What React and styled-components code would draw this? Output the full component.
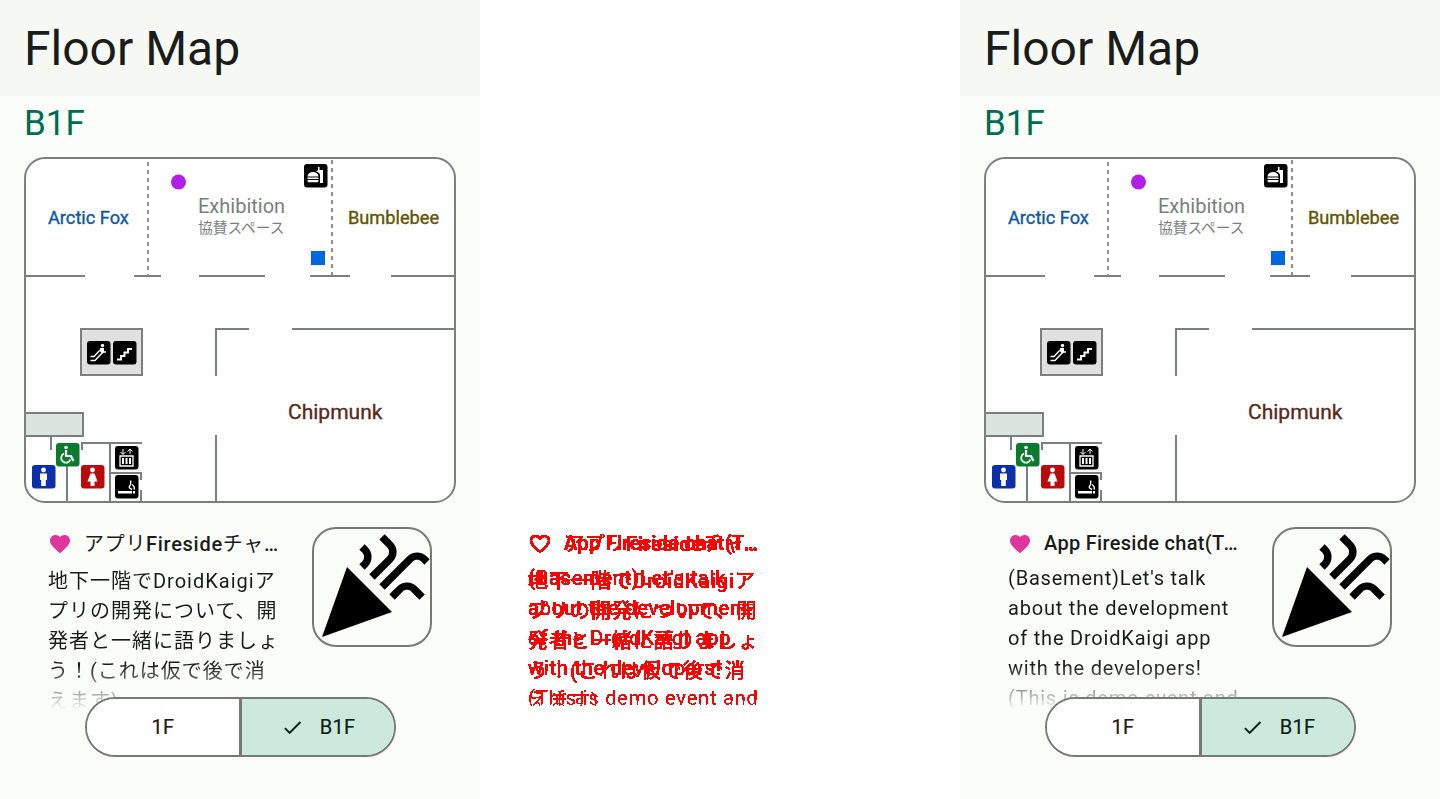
import React from "react";
import styled, { createGlobalStyle } from "styled-components";

const GlobalStyle = createGlobalStyle`
  html, body {
    margin: 0;
    padding: 0;
    background: #ffffff;
    font-family: "Roboto", "Noto Sans CJK JP", sans-serif;
  }
`;

const Page = styled.div`
  display: grid;
  grid-template-columns: repeat(3, 480px);
  height: 799px;
  overflow: hidden;
`;

const Screen = styled.section`
  position: relative;
  height: 799px;
  background: #fbfdf8;
`;

const TestLayer = styled.section`
  height: 799px;
  padding-top: 527px;
  box-sizing: border-box;
  background: #ffffff;
`;

const TopBar = styled.header`
  height: 96px;
  padding: 0 24px;
  box-sizing: border-box;
  background: #f5f8f3;
  color: #191c1a;
  font-size: 48px;
  line-height: 98px;
`;

const FloorLabel = styled.h2`
  margin: 0 0 5px;
  padding: 0 24px;
  color: #006c4e;
  font-size: 35px;
  font-weight: 400;
  line-height: 56px;
`;

const MapFrame = styled.svg`
  display: block;
  margin-left: 24px;
  width: 432px;
  height: 346px;
`;

const RoomName = styled.text`
  font-family: "Roboto", "Noto Sans CJK JP", sans-serif;
  font-size: ${(p) => p.$size || 18.2}px;
  font-weight: 400;
  fill: ${(p) => p.$color};
  stroke: ${(p) => p.$color};
  stroke-width: ${(p) => (p.$thin ? 0 : 0.35)}px;
`;

const Card = styled.article`
  position: relative;
  display: flex;
  gap: 30px;
  margin-top: ${(p) => (p.$flush ? 0 : 24)}px;
  padding-left: 48px;
`;

const CardText = styled.div`
  width: 234px;
  color: ${(p) => (p.$test ? "#ff0000" : "#191c1a")};
`;

const TitleRow = styled.div`
  display: flex;
  align-items: center;
  gap: 12px;
  height: 33px;
`;

const CardTitle = styled.div`
  flex: 1;
  min-width: 0;
  overflow: hidden;
  white-space: nowrap;
  text-overflow: ellipsis;
  font-size: 20px;
  font-weight: 500;
  letter-spacing: ${(p) => p.$spacing}px;
  line-height: 26px;
  margin-top: ${(p) => p.$shift}px;
`;

const Kana = styled.span`
  font-weight: 400;
`;

const CardBody = styled.p`
  margin: 0;
  padding-top: ${(p) => p.$shift}px;
  height: 150px;
  box-sizing: border-box;
  overflow: hidden;
  font-size: 20px;
  letter-spacing: ${(p) => p.$spacing}px;
  line-height: 30px;
  mask-image: linear-gradient(#000 70%, transparent 100%);
`;

const Thumb = styled.div`
  flex: none;
  width: 120px;
  height: 120px;
  box-sizing: border-box;
  border: 2px solid #747a75;
  border-radius: 24px;
  overflow: hidden;
  svg {
    display: block;
    margin: -2px;
  }
`;

const FloorToggle = styled.div`
  position: absolute;
  left: 85px;
  bottom: 42px;
  display: flex;
  width: 311px;
  height: 60px;
  box-sizing: border-box;
  border: 2px solid #747a75;
  border-radius: 30px;
  overflow: hidden;
  background: #fbfdf8;
`;

const ToggleItem = styled.div`
  flex: 1;
  display: flex;
  align-items: center;
  justify-content: center;
  gap: 16px;
  background: ${(p) => (p.$active ? "#cde8dc" : "#ffffff")};
  color: ${(p) => (p.$active ? "#08201a" : "#191c1a")};
  font-size: 20px;
  font-weight: 400;
  letter-spacing: 0.25px;
  -webkit-text-stroke: 0.2px currentColor;
  & + & {
    border-left: 3px solid #747a75;
  }
`;

const TestOverlay = styled.div`
  position: absolute;
  top: 0;
  left: 48px;
`;

const Aliased = styled.div`
  filter: url(#threshold);
`;

const wall = "#7a817c";

function Picto({ x, y, color = "#000000", children }) {
  return (
    <g transform={`translate(${x} ${y})`}>
      <rect width="23.500" height="23.500" rx="3" fill={color} />
      {children}
    </g>
  );
}

function FloorMap() {
  const walls = [
    "M1 119H61M110 119H137M175 119H241M286 119H326M367 119H431",
    "M192 219V172H225M268 172H431M192 278V345",
    "M27 279V293M43 309V345M58 293V286H118M86 286V345M86 316H117V323M117 333V345",
  ];
  return (
    <MapFrame viewBox="0 0 432 346">
      <rect x="1" y="1" width="430" height="344" rx="20" fill="#ffffff" />
      <path d="M124 5V119M308 3V119" stroke="#8a908c" strokeWidth="2" strokeDasharray="4 4" fill="none" />
      <rect x="1" y="256" width="58" height="23" fill="#dbe4de" stroke={wall} strokeWidth="2" />
      <rect x="57" y="172" width="61" height="46" fill="#e0e0e0" stroke={wall} strokeWidth="2" />
      {walls.map((d) => (
        <path key={d} d={d} stroke={wall} strokeWidth="2" fill="none" />
      ))}
      <rect x="1" y="1" width="430" height="344" rx="20" fill="none" stroke={wall} strokeWidth="2" />

      <circle cx="154.500" cy="25" r="7.500" fill="#b01fe8" />
      <rect x="287" y="94" width="14" height="14" fill="#0066e0" />

      <RoomName x="24" y="67" $color="#0a56a8">Arctic Fox</RoomName>
      <RoomName x="174" y="56" $size={20} $thin $color="#7a7f7c">Exhibition</RoomName>
      <RoomName x="174" y="76" $size={14.700} $thin $color="#7a7f7c">協賛スペース</RoomName>
      <RoomName x="324" y="67" $color="#605500">Bumblebee</RoomName>
      <RoomName x="264" y="262" $size={21} $color="#5a2a20">Chipmunk</RoomName>

      <Picto x={280} y={7}>
        <path d="M3.500 12.500a5.500 4.500 0 0 1 11 0zM3.500 13.500h11V15h-11zM3.500 16h11v.8A1.500 1.500 0 0 1 13 18.300H5a1.500 1.500 0 0 1-1.500-1.500z" fill="#fff" />
        <path d="M12 7.500l2-1.500V3h1.500v3H19v13h-3v-8c0-1.500-1.500-3-4-3.500z" fill="#fff" />
      </Picto>

      <Picto x={63} y={184}>
        <circle cx="15.500" cy="4.500" r="1.700" fill="#fff" />
        <path d="M3.500 19.500h4.500L16 11h3" stroke="#fff" strokeWidth="1.300" fill="none" />
        <path d="M3.500 15.500H7l5.500-6" stroke="#fff" strokeWidth="1.300" fill="none" />
        <path d="M13 7h4v4l-1.500 1.500-3-2.500z" fill="#fff" />
      </Picto>
      <Picto x={89} y={184}>
        <path d="M4 18.500h4v-3.500h3.500v-3.500H15V8h4" stroke="#fff" strokeWidth="2" fill="none" />
      </Picto>

      <Picto x={32} y={286} color="#0a7a2c">
        <circle cx="10" cy="4.500" r="1.800" fill="#fff" />
        <path d="M10 7v6h5l2.500 5" stroke="#fff" strokeWidth="2.200" fill="none" />
        <path d="M8 10.500a4.800 4.800 0 1 0 6.500 6" stroke="#fff" strokeWidth="1.800" fill="none" />
      </Picto>
      <Picto x={8} y={308} color="#0a2fa8">
        <circle cx="11.500" cy="5" r="2.400" fill="#fff" />
        <path d="M8 8.500h7v6.500h-1.200V21H9.200v-6H8z" fill="#fff" />
      </Picto>
      <Picto x={57} y={308} color="#b80c0c">
        <circle cx="11.500" cy="5" r="2.400" fill="#fff" />
        <path d="M9.500 8.500h4l3 8h-3V21h-4v-4.500h-3z" fill="#fff" />
      </Picto>

      <Picto x={91} y={289}>
        <path d="M5 10h13v10H5z" fill="none" stroke="#fff" strokeWidth="1.300" />
        <path d="M8 12v6M11.500 12v6M15 12v6" stroke="#fff" strokeWidth="2" />
        <path d="M8 3v5M5.500 6l2.500 2.500L10.500 6M15 8V3M12.500 5.500L15 3l2.500 2.500" stroke="#fff" strokeWidth="1" fill="none" />
      </Picto>
      <Picto x={91} y={318}>
        <path d="M3 16h14v2.500H3z" fill="#fff" />
        <path d="M18 16h2v2.500h-2z" fill="#fff" />
        <path d="M17 14.500c-2-1-4-2-2-4 1.500-1 0-3 1-5M19 14.500c1-2 0-3.500-2-5" stroke="#fff" strokeWidth="1.400" fill="none" />
      </Picto>
    </MapFrame>
  );
}

function Heart({ outline }) {
  return (
    <svg width="24" height="24" viewBox="0 0 24 24" fill={outline ? "#ff0000" : "#e0359f"} style={{ flex: "none" }}>
      <path
        d={
          outline
            ? "M16.500 3c-1.740 0-3.410.810-4.500 2.090C10.910 3.810 9.240 3 7.500 3 4.420 3 2 5.420 2 8.500c0 3.780 3.400 6.860 8.550 11.540L12 21.350l1.450-1.320C18.600 15.360 22 12.280 22 8.500 22 5.420 19.580 3 16.500 3zm-4.400 15.550l-.1.1-.1-.1C7.140 14.240 4 11.390 4 8.500 4 6.500 5.500 5 7.500 5c1.540 0 3.040.990 3.570 2.360h1.870C13.460 5.990 14.960 5 16.500 5c2 0 3.500 1.500 3.500 3.500 0 2.890-3.140 5.740-7.900 10.050z"
            : "M12 21.350l-1.450-1.320C5.400 15.360 2 12.280 2 8.500 2 5.420 4.420 3 7.500 3c1.740 0 3.410.810 4.500 2.090C13.090 3.810 14.760 3 16.500 3 19.580 3 22 5.420 22 8.500c0 3.780-3.400 6.860-8.550 11.540L12 21.350z"
        }
      />
    </svg>
  );
}

function Celebration() {
  return (
    <svg width="120" height="120" viewBox="0 0 24 24" fill="#000000">
      <path d="M2 22l14-5-9-9zM14.530 12.530l5.590-5.590c.490-.490 1.280-.490 1.770 0l.590.590 1.060-1.060-.590-.590c-1.070-1.070-2.820-1.070-3.890 0l-5.590 5.590 1.060 1.060zM10.060 6.880l-.590.590 1.060 1.060.590-.590c1.070-1.070 1.070-2.820 0-3.890l-.590-.590-1.060 1.070.590.590c.480.480.480 1.280 0 1.760zM17.060 11.880l-1.590 1.590 1.060 1.060 1.590-1.590c.490-.490 1.280-.490 1.770 0l1.610 1.610 1.060-1.060-1.610-1.610c-1.080-1.070-2.820-1.070-3.890 0zM15.060 5.880l-3.590 3.590 1.060 1.060 3.590-3.590c1.070-1.070 1.070-2.820 0-3.890l-1.590-1.590-1.060 1.060 1.590 1.590c.480.490.480 1.290 0 1.770z" />
    </svg>
  );
}

function EventText({ event, test }) {
  return (
    <CardText $test={test}>
      <TitleRow>
        <Heart outline={test} />
        <CardTitle $spacing={event.titleSpacing} $shift={event.titleShift}>{event.title}</CardTitle>
      </TitleRow>
      <CardBody $spacing={event.bodySpacing} $shift={event.bodyShift}>{event.body}</CardBody>
    </CardText>
  );
}

function Toggle() {
  return (
    <FloorToggle>
      <ToggleItem>1F</ToggleItem>
      <ToggleItem $active>
        <svg width="23" height="23" viewBox="0 0 24 24" fill="#08201a">
          <path d="M9 16.170L4.830 12l-1.420 1.410L9 19 21 7l-1.410-1.410z" />
        </svg>
        B1F
      </ToggleItem>
    </FloorToggle>
  );
}

function FloorScreen({ event }) {
  return (
    <Screen>
      <TopBar>Floor Map</TopBar>
      <FloorLabel>B1F</FloorLabel>
      <FloorMap />
      <Card>
        <EventText event={event} />
        <Thumb>
          <Celebration />
        </Thumb>
      </Card>
      <Toggle />
    </Screen>
  );
}

const ja = {
  title: (
    <>
      <Kana>アプリ</Kana>Fireside<Kana>チャット(テスト)</Kana>
    </>
  ),
  body: "地下一階でDroidKaigiアプリの開発について、開発者と一緒に語りましょう！(これは仮で後で消えます)",
  titleSpacing: 0.7,
  titleShift: 0,
  bodySpacing: 1.0,
  bodyShift: 6,
};

const en = {
  title: "App Fireside chat(Test)",
  body: "(Basement)Let's talk about the development of the DroidKaigi app with the developers! (This is demo event and will be removed later)",
  titleSpacing: 0.3,
  titleShift: -2,
  bodySpacing: 0.8,
  bodyShift: 3,
};

export default function App() {
  return (
    <Page>
      <GlobalStyle />
      <svg width="0" height="0" style={{ position: "absolute" }}>
        <filter id="threshold" colorInterpolationFilters="sRGB">
          <feComponentTransfer>
            <feFuncA type="discrete" tableValues="0 1 1 1 1 1 1 1 1 1 1 1" />
          </feComponentTransfer>
        </filter>
      </svg>
      <FloorScreen event={ja} />
      <TestLayer>
        <Card as="div" $flush>
          <Aliased>
            <EventText event={ja} test />
          </Aliased>
          <TestOverlay>
            <Aliased>
              <EventText event={en} test />
            </Aliased>
          </TestOverlay>
        </Card>
      </TestLayer>
      <FloorScreen event={en} />
    </Page>
  );
}
